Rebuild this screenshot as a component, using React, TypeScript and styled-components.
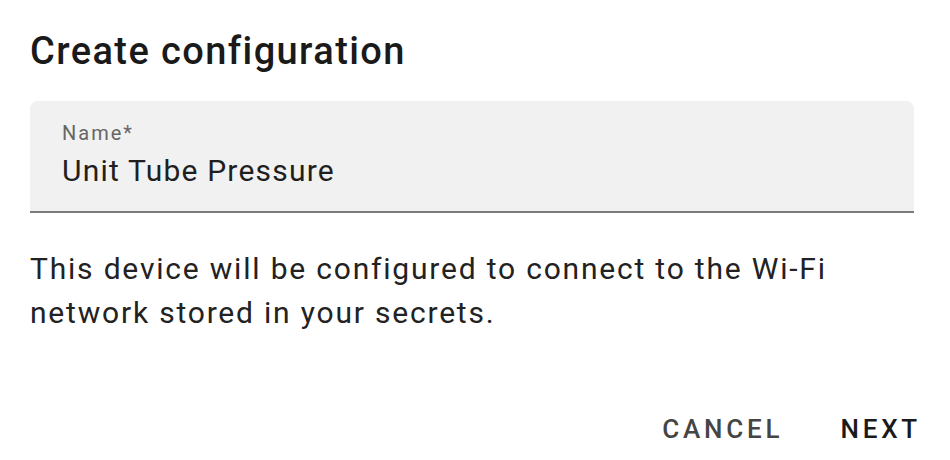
import styled, { createGlobalStyle } from "styled-components"

const GlobalStyle = createGlobalStyle`
    html, body {
        margin: 0;
        padding: 0;
        background: #ffffff;
    }
    body {
        font-family: Roboto, "Noto Sans CJK SC", sans-serif;
        color: #1f1f1f;
    }
`

export default function App() {
    return (
        <>
            <GlobalStyle />
            <Dialog>
                <Title>Create configuration</Title>
                <Field>
                    <FieldLabel>Name*</FieldLabel>
                    <FieldValue>Unit Tube Pressure</FieldValue>
                </Field>
                <Description>
                    This device will be configured to connect to the Wi‑Fi network stored in your secrets.
                </Description>
                <Actions>
                    <ActionButton>Cancel</ActionButton>
                    <ActionButton $primary>Next</ActionButton>
                </Actions>
            </Dialog>
        </>
    )
}

const Dialog = styled.div`
    width: 950px;
    height: 460px;
    box-sizing: border-box;
    display: flex;
    flex-direction: column;
    padding: 26px 36px 0 30px;
`
const Title = styled.h2`
    margin: 0;
    font-size: 38px;
    font-weight: 500;
    line-height: 50px;
    letter-spacing: 1.4px;
    color: #1a1a1a;
`
const Field = styled.div`
    margin-top: 25px;
    height: 110px;
    box-sizing: content-box;
    background: #f1f1f1;
    border-radius: 8px 8px 0 0;
    border-bottom: 2px solid #7b7b7b;
    display: flex;
    flex-direction: column;
    padding: 0 32px;
`
const FieldLabel = styled.span`
    margin-top: 18px;
    font-size: 20px;
    line-height: 28px;
    letter-spacing: 2px;
    color: #666666;
`
const FieldValue = styled.span`
    margin-top: 4px;
    font-size: 30px;
    line-height: 40px;
    letter-spacing: 1.2px;
    color: #1f1f1f;
`
const Description = styled.p`
    margin: 34px 0 0;
    width: 880px;
    font-size: 30px;
    line-height: 44px;
    letter-spacing: 1.8px;
    color: #222222;
`
const Actions = styled.div`
    margin-top: auto;
    margin-bottom: 16px;
    margin-right: -7px;
    display: flex;
    justify-content: flex-end;
    gap: 57px;
`
const ActionButton = styled.button<{ $primary?: boolean }>`
    border: none;
    background: none;
    padding: 0;
    font-family: inherit;
    font-size: 26px;
    font-weight: 500;
    letter-spacing: 3.8px;
    text-transform: uppercase;
    color: ${(p) => (p.$primary ? "#1a1a1a" : "#454545")};
    cursor: pointer;
`
